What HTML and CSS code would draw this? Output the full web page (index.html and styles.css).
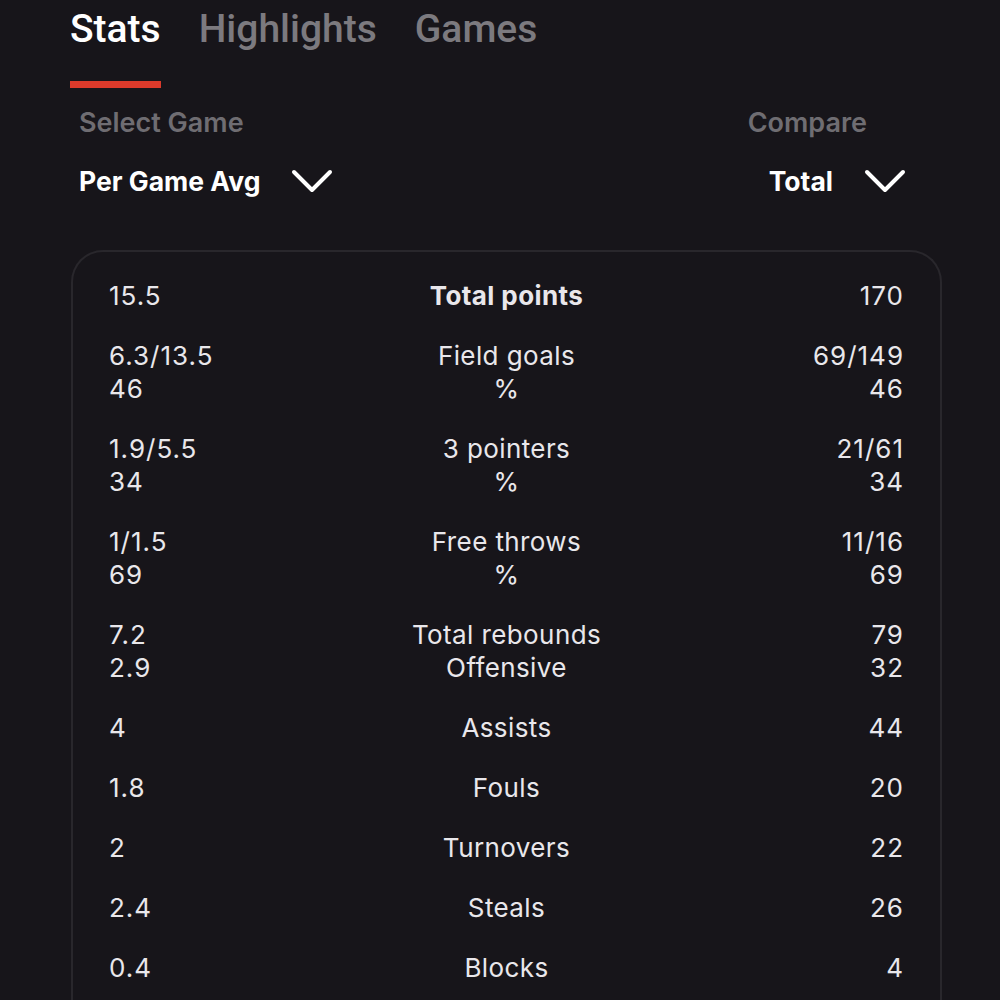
FILE: index.html
```html
<!DOCTYPE html>
<html>
<head>
<meta charset="utf-8">
<link rel="stylesheet" href="styles.css">
</head>
<body>
<div class="page">
  <nav class="tabs">
    <div class="tab active">Stats</div>
    <div class="tab">Highlights</div>
    <div class="tab">Games</div>
  </nav>
  <div class="selectors">
    <div class="sel sel-left">
      <div class="sel-label">Select Game</div>
      <div class="sel-value">Per Game Avg
        <svg class="chev" width="42" height="24" viewBox="0 0 42 24"><path d="M3 3 L21 21 L39 3" fill="none" stroke="#fff" stroke-width="4" stroke-linecap="round" stroke-linejoin="round"/></svg>
      </div>
    </div>
    <div class="sel sel-right">
      <div class="sel-label">Compare</div>
      <div class="sel-value">Total
        <svg class="chev" width="42" height="24" viewBox="0 0 42 24"><path d="M3 3 L21 21 L39 3" fill="none" stroke="#fff" stroke-width="4" stroke-linecap="round" stroke-linejoin="round"/></svg>
      </div>
    </div>
  </div>
  <div class="card">
    <div class="row"><div class="l">15.5</div><div class="c bold">Total points</div><div class="r">170</div></div>
    <div class="row"><div class="l">6.3/13.5<br>46</div><div class="c">Field goals<br>%</div><div class="r">69/149<br>46</div></div>
    <div class="row"><div class="l">1.9/5.5<br>34</div><div class="c">3 pointers<br>%</div><div class="r">21/61<br>34</div></div>
    <div class="row"><div class="l">1/1.5<br>69</div><div class="c">Free throws<br>%</div><div class="r">11/16<br>69</div></div>
    <div class="row"><div class="l">7.2<br>2.9</div><div class="c">Total rebounds<br>Offensive</div><div class="r">79<br>32</div></div>
    <div class="row"><div class="l">4</div><div class="c">Assists</div><div class="r">44</div></div>
    <div class="row"><div class="l">1.8</div><div class="c">Fouls</div><div class="r">20</div></div>
    <div class="row"><div class="l">2</div><div class="c">Turnovers</div><div class="r">22</div></div>
    <div class="row"><div class="l">2.4</div><div class="c">Steals</div><div class="r">26</div></div>
    <div class="row"><div class="l">0.4</div><div class="c">Blocks</div><div class="r">4</div></div>
  </div>
</div>
</body>
</html>
```
FILE: styles.css
```css
html, body {
  margin: 0;
  padding: 0;
  background: #17151a;
  height: 100%;
  overflow: hidden;
}
.page {
  width: 1000px;
  height: 1000px;
  box-sizing: border-box;
  padding: 0 59px 0 71px;
  color: #fff;
}
.tabs {
  display: flex;
  gap: 38px;
  margin-left: -1px;
  height: 89px;
}
.tab {
  font-family: Roboto, sans-serif;
  font-weight: 500;
  font-size: 39px;
  line-height: 39px;
  padding-top: 11px;
  color: #7c7a7f;
  height: 89px;
  box-sizing: border-box;
  border-bottom: 7px solid transparent;
  margin-top: -1px;
}
.tab.active {
  color: #fff;
  border-bottom-color: #dc3a2b;
}
.selectors {
  display: flex;
  justify-content: space-between;
  padding: 19px 35px 0 8px;
  height: 161px;
  box-sizing: border-box;
}
.sel {
  display: flex;
  flex-direction: column;
}
.sel-label {
  font-family: Inter, sans-serif;
  font-weight: 600;
  font-size: 27px;
  line-height: 30px;
  color: #6f6d72;
}
.sel-right .sel-label {
  margin-left: -21px;
}
.sel-value {
  margin-top: 28px;
  display: flex;
  align-items: center;
  gap: 31px;
  font-family: Inter, sans-serif;
  font-weight: 700;
  font-size: 26.5px;
  line-height: 30px;
  color: #fff;
}
.chev {
  display: block;
  margin-top: -1px;
}
.card {
  border: 2px solid #29272c;
  border-bottom: none;
  border-radius: 32px 32px 0 0;
  padding: 27px 36px 0 36px;
  height: 760px;
  box-sizing: border-box;
  width: 871px;
  display: flex;
  flex-direction: column;
  gap: 27px;
}
.row {
  display: grid;
  grid-template-columns: 1fr 1fr 1fr;
  font-family: Inter, sans-serif;
  font-size: 26px;
  letter-spacing: 0.4px;
  line-height: 33px;
  color: #e9e7eb;
}
.l, .r {
  letter-spacing: 1px;
}
.l { text-align: left; }
.c { text-align: center; white-space: nowrap; }
.r { text-align: right; }
.bold { font-weight: 700; }
```
